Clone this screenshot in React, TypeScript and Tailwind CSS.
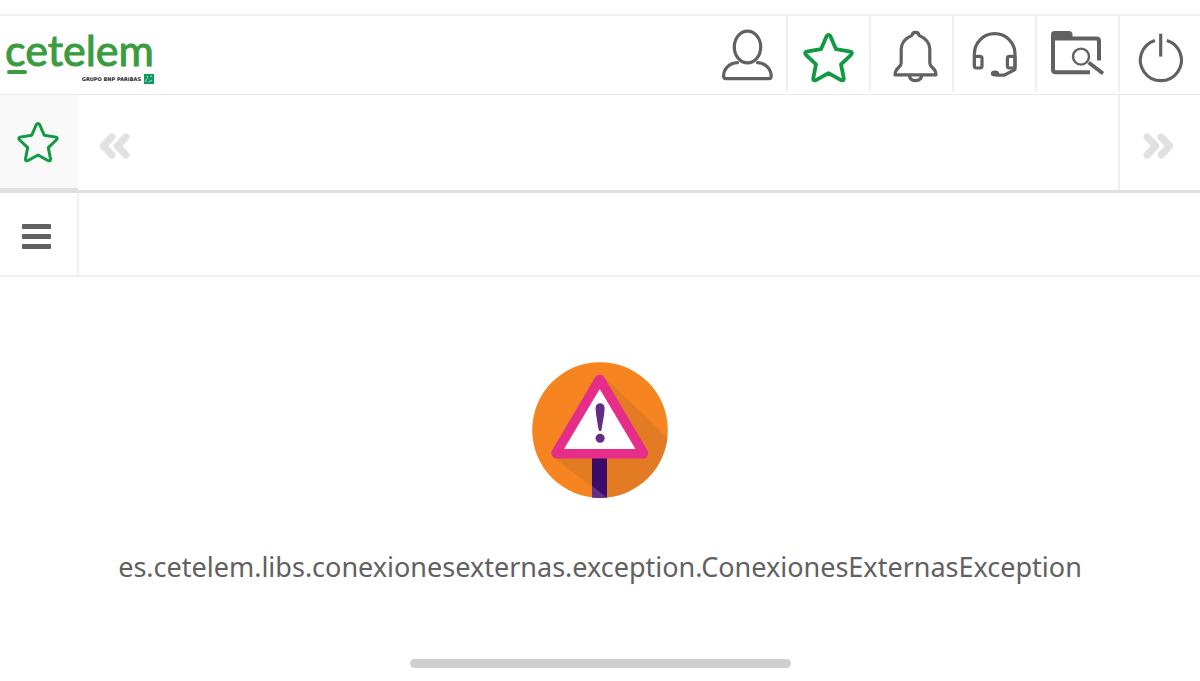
import React from 'react';
import type { ReactNode } from 'react';

interface IconProps {
  className?: string;
}

// ---------- Icons ----------

const ToolbarIcon = ({ children }: { children: ReactNode }) => (
  <svg
    viewBox="0 0 81 76"
    className="w-full h-[76px]"
    fill="none"
    stroke="currentColor"
    strokeWidth="3.2"
    strokeLinecap="round"
    strokeLinejoin="round"
    aria-hidden="true"
  >
    {children}
  </svg>
);

const starPath =
  'M38.6 20.2Q40.5 17.6 42.4 20.2L48 33.2L62.5 35.6Q65 36.6 63 38.8L53 48.3L55.8 62.4Q55.8 65 53 64.2L40.5 57.2L28 64.2Q25.2 65 25.2 62.4L28 48.3L18 38.8Q16 36.6 18.5 35.6L33 33.2Z';

const StarIcon = ({ className }: IconProps) => (
  <svg viewBox="15 16 51 51" className={className} fill="none" stroke="currentColor" strokeWidth="3.6" strokeLinejoin="round" aria-hidden="true">
    <path d={starPath} />
  </svg>
);

const DoubleChevron = ({ className }: IconProps) => (
  <svg viewBox="0 0 31 26" className={className} fill="none" stroke="currentColor" strokeWidth="7.2" strokeLinecap="round" strokeLinejoin="round" aria-hidden="true">
    <path d="M12.8 4L4.4 13L12.8 22M26.8 4L18.4 13L26.8 22" />
  </svg>
);

const WarningSign = ({ className }: IconProps) => (
  <svg viewBox="0 0 136 136" className={className} role="img" aria-label="Error">
    <defs>
      <clipPath id="disc">
        <circle cx="68" cy="68" r="67.8" />
      </clipPath>
    </defs>
    <g clipPath="url(#disc)">
      <rect width="136" height="136" fill="#f68420" />
      {/* long shadow */}
      <path d="M72 15L136 76V136H75L21 95Z" fill="#e37a24" />
      <rect x="60" y="92" width="15" height="44" fill="#3a0c69" />
      <path d="M60 124L75 135.5V136H60Z" fill="#633087" />
    </g>
    <path d="M67.7 18L24.5 91.2H111Z" fill="#e62d8a" stroke="#e62d8a" strokeWidth="10.4" strokeLinejoin="round" />
    <path d="M67.7 27L32 87H103.5Z" fill="#fff" />
    <path d="M63.6 46C63.6 39.8 72.6 39.8 72.6 46C72.6 52 70.2 63 69.6 67.6Q68.1 71 66.6 67.6C66 63 63.6 52 63.6 46Z" fill="#632c86" />
    <circle cx="68.1" cy="76.3" r="4.5" fill="#632c86" />
  </svg>
);

const BnpMark = ({ className }: IconProps) => (
  <svg viewBox="0 0 10 10" className={className} aria-hidden="true">
    <rect width="10" height="10" fill="#0f9a61" />
    <path d="M1.6 8Q1.6 5.4 3.6 4.4M4.6 8.2Q6 6.6 8.2 6.6M6 2.4L8 2" stroke="#d5f0e4" strokeWidth="0.8" fill="none" />
    <circle cx="3.4" cy="2.8" r="0.7" fill="#d5f0e4" />
  </svg>
);

// ---------- Data ----------

const tools = [
  {
    label: 'Usuario',
    style: 'w-[83px] border-transparent',
    icon: (
      <>
        <ellipse cx="42.5" cy="31" rx="13.2" ry="15.8" />
        <path d="M32.5 46.6C24 47 18.6 53 18.6 60Q18.6 62.6 21 62.6H64Q66.2 62.6 66.2 60C66.2 53 60.5 47 52.5 46.6" />
      </>
    ),
  },
  {
    label: 'Favoritos',
    style: 'w-[83px] border-[#f0f0f0] text-[#119a41]',
    icon: <path strokeWidth="3.8" d={starPath} />,
  },
  {
    label: 'Avisos',
    style: 'w-[83px] border-[#f0f0f0]',
    icon: (
      <>
        <path d="M44.5 16.4Q47.6 16.4 48 19.4C55 22.5 58.8 27 58.8 33V47C58.8 52 65 51 65 58.8H24C24 51 30.2 52 30.2 47V33C30.2 27 34 22.5 41 19.4Q41.4 16.4 44.5 16.4Z" />
        <path d="M38.4 59Q38.4 64.6 44.5 64.6Q50.6 64.6 50.6 59" />
      </>
    ),
  },
  {
    label: 'Soporte',
    style: 'w-[83px] border-[#f0f0f0]',
    icon: (
      <>
        <path d="M20.4 50V38A20.3 20.3 0 0 1 61 38V53.6L50 59.2H43" />
        <rect x="20.4" y="40.4" width="7.6" height="11.6" rx="2" />
        <rect x="53.4" y="40.4" width="7.6" height="11.6" rx="2" />
        <ellipse cx="41" cy="57.6" rx="2.6" ry="1.4" fill="currentColor" />
      </>
    ),
  },
  {
    label: 'Buscar expediente',
    style: 'w-[83px] border-[#f0f0f0]',
    icon: (
      <>
        <path d="M14 24V18.5Q14 15 17.5 15H32Q35.5 15 35.5 18.5V23H14Z" fill="currentColor" stroke="none" />
        <path strokeWidth="4" strokeLinecap="butt" d="M53 56.2H18.5Q16 56.2 16 53.5V22.6H59.5Q62 22.6 62 25V44.6" />
        <circle cx="44" cy="40.6" r="8" strokeWidth="2.4" />
        <path strokeWidth="3.8" strokeLinecap="butt" d="M51.6 46.6L66 57.6" />
      </>
    ),
  },
  {
    label: 'Salir',
    style: 'w-[82px] border-[#f0f0f0]',
    icon: (
      <>
        <path strokeLinecap="butt" d="M35.4 24.3A20.8 20.8 0 1 0 47.4 24.3" />
        <path strokeLinecap="butt" d="M41.2 17.4V40.6" />
      </>
    ),
  },
];

// ---------- Layout ----------

const Logo = () => (
  <a href="#" aria-label="Cetelem" className="ml-[5px] w-[149px] flex flex-col">
    <span className="relative text-[43px] leading-[48px] text-[#3a9b3f] [-webkit-text-stroke:1px_#3a9b3f] font-['Lato',sans-serif]">
      cetelem
      <span className="absolute left-[2px] bottom-0 w-5 h-1 rounded-full bg-[#3a9b3f]" />
    </span>
    <span className="flex items-center justify-end gap-[3px] text-[5px] leading-[10px] font-bold text-[#222] whitespace-nowrap font-['DejaVu_Sans',sans-serif]">
      GRUPO BNP PARIBAS
      <BnpMark className="w-[10px] h-[10px]" />
    </span>
  </a>
);

export default function App() {
  return (
    <div className="min-h-screen bg-white pt-[14px] flex flex-col text-[#616161] font-['Noto_Sans',sans-serif]">

      {/* Header */}
      <header className="flex justify-between items-center border-t-2 border-b border-t-[#f0f0f0] border-b-[#e8e8e8]">
        <Logo />
        <nav className="flex pb-[2px]">
          {tools.map((tool) => (
            <button key={tool.label} type="button" aria-label={tool.label} className={`border-l-2 ${tool.style}`}>
              <ToolbarIcon>{tool.icon}</ToolbarIcon>
            </button>
          ))}
        </nav>
      </header>

      {/* Favourites strip */}
      <div className="flex h-[98px]">
        <button type="button" aria-label="Favoritos" className="w-[78px] pr-[3px] flex justify-center items-center bg-[#f9f9f9] border-b-5 border-[#e0e0e0] text-[#119a41]">
          <StarIcon className="w-[42px] h-[42px]" />
        </button>
        <div className="flex-1 flex justify-between border-b-3 border-[#e0e0e0] text-[#e1e1e1]">
          <button type="button" aria-label="Anterior" className="pl-[21px] pt-[6px] flex items-center">
            <DoubleChevron className="w-[31px] h-[26px]" />
          </button>
          <button type="button" aria-label="Siguiente" className="w-[82px] pt-[6px] pr-[3px] flex justify-center items-center border-l-2 border-[#f0f0f0]">
            <DoubleChevron className="w-[31px] h-[26px] rotate-180" />
          </button>
        </div>
      </div>

      {/* Menu bar */}
      <div className="flex h-[84px] border-b-2 border-[#f0f0f0]">
        <button type="button" aria-label="Menú" className="w-[79px] pt-1 pr-1 flex flex-col justify-center items-center gap-[5px] border-r-2 border-[#f0f0f0]">
          <span className="w-[29px] h-[5px] rounded-[1px] bg-[#616161]" />
          <span className="w-[29px] h-[5px] rounded-[1px] bg-[#616161]" />
          <span className="w-[29px] h-[5px] rounded-[1px] bg-[#616161]" />
        </button>
      </div>

      {/* Error message */}
      <main className="flex-1 pt-[85px] flex flex-col items-center">
        <WarningSign className="w-[136px] h-[136px]" />
        <p className="mt-[50px] text-[27px] leading-[38px] text-center">
          es.cetelem.libs.conexionesexternas.exception.ConexionesExternasException
        </p>
      </main>

      <div className="w-[381px] h-[9px] mb-[13px] self-center rounded-full bg-[#cfcfcf]" />
    </div>
  );
}
